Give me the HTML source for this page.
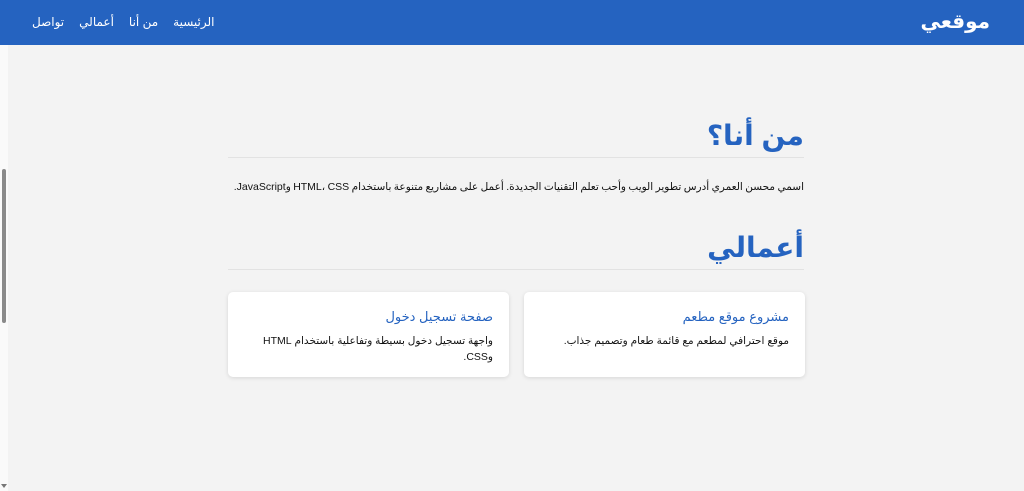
<!DOCTYPE html>
<html dir="rtl" lang="ar"><head><meta charset="utf-8"><style>
*{box-sizing:border-box;margin:0;padding:0}
body{width:1024px;height:491px;overflow:hidden;background:#f3f3f3;font-family:"Liberation Sans","DejaVu Sans",sans-serif;position:relative}
header{position:absolute;left:0;top:0;width:1024px;height:45px;background:#2563c0;color:#fff}
.logo{position:absolute;right:34px;top:9px;font-size:20px;font-weight:bold}
nav{position:absolute;left:32px;top:15px;font-size:12px;direction:rtl;display:flex;gap:15px}
.sb{position:absolute;left:0;top:45px;width:8px;height:446px;background:#fafafa}
.thumb{position:absolute;left:2px;top:169px;width:4px;height:154px;background:#8a8a8a;border-radius:2px}
.arrow{position:absolute;left:1px;top:484px;width:0;height:0;border-left:3px solid transparent;border-right:3px solid transparent;border-top:4px solid #777}
.wrap{position:absolute;left:228px;width:576px}
h2{font-size:28px;color:#2563c0;font-weight:bold;border-bottom:1px solid #e2e2e2;line-height:40px}
p.t{font-size:10.5px;color:#111;white-space:nowrap;word-spacing:-0.5px}
.card{position:absolute;top:292px;width:281px;height:85px;background:#fff;border-radius:5px;box-shadow:0 1px 4px rgba(0,0,0,.12);padding:17px 16px}
.card h3{font-size:13px;color:#2563c0;font-weight:normal;margin-bottom:8px}
.card p{font-size:10.5px;color:#111;line-height:16px}
</style></head><body>
<header><div class="logo">موقعي</div>
<nav><span>الرئيسية</span><span>من أنا</span><span>أعمالي</span><span>تواصل</span></nav></header>
<div class="sb"></div><div class="thumb"></div><div class="arrow"></div>
<div class="wrap" style="top:116px;height:42px"><h2 style="height:42px">من أنا؟</h2></div>
<div class="wrap" style="top:181px"><p class="t">اسمي محسن العمري أدرس تطوير الويب وأحب تعلم التقنيات الجديدة. أعمل على مشاريع متنوعة باستخدام HTML، CSS وJavaScript.</p></div>
<div class="wrap" style="top:228px"><h2 style="height:42px">أعمالي</h2></div>
<div class="card" style="left:524px"><h3>مشروع موقع مطعم</h3><p>موقع احترافي لمطعم مع قائمة طعام وتصميم جذاب.</p></div>
<div class="card" style="left:228px"><h3>صفحة تسجيل دخول</h3><p>واجهة تسجيل دخول بسيطة وتفاعلية باستخدام HTML وCSS.</p></div>
</body></html>
